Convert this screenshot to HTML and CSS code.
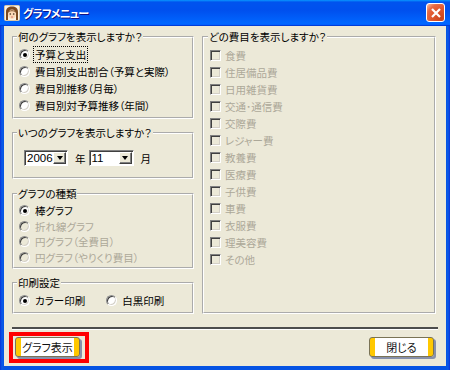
FILE: index.html
```html
<!DOCTYPE html>
<html lang="ja">
<head>
<meta charset="utf-8">
<title>グラフメニュー</title>
<link rel="stylesheet" href="styles.css">
</head>
<body>
<div class="window">
  <div class="titlebar">
    <svg class="appicon" width="16" height="16" viewBox="0 0 16 16">
      <rect x="0.5" y="0.5" width="15" height="15" rx="1" fill="#fbf3e6" stroke="#d9c7a8"/>
      <path d="M2 15V7C2 3 4.5 1.5 8 1.5S14 3 14 7V15H12V8H4V15Z" fill="#7a4a22"/>
      <ellipse cx="8" cy="9.3" rx="4" ry="4.7" fill="#fbd8b6"/>
      <path d="M4 7.6C5 4.4 11 4.4 12 7.6C10 5.9 6 5.9 4 7.6Z" fill="#7a4a22"/>
      <circle cx="6.3" cy="9" r="0.8" fill="#3a2a1a"/>
      <circle cx="9.7" cy="9" r="0.8" fill="#3a2a1a"/>
      <path d="M7 12H9" stroke="#d2605a" stroke-width="0.8"/>
    </svg>
    <span class="title">グラフメニュー</span>
    <span class="close"><svg width="12" height="12" viewBox="0 0 12 12"><path d="M2 2L10 10M10 2L2 10" stroke="#fff" stroke-width="2.2"/></svg></span>
  </div>
  <div class="client">
    <div class="columns">
      <div class="leftcol">
        <fieldset class="group g1">
          <legend>何のグラフを表示しますか？</legend>
          <div class="opt"><span class="radio on"></span><span class="focus">予算と支出</span></div>
          <div class="opt"><span class="radio"></span>費目別支出割合（予算と実際）</div>
          <div class="opt"><span class="radio"></span>費目別推移（月毎）</div>
          <div class="opt"><span class="radio"></span>費目別対予算推移（年間）</div>
        </fieldset>
        <fieldset class="group g2">
          <legend>いつのグラフを表示しますか？</legend>
          <div class="daterow">
            <span class="combo c1"><span class="val">2006</span><span class="drop"></span></span>
            <span class="unit">年</span>
            <span class="combo c2"><span class="val">11</span><span class="drop"></span></span>
            <span class="unit">月</span>
          </div>
        </fieldset>
        <fieldset class="group g3">
          <legend>グラフの種類</legend>
          <div class="opt"><span class="radio on"></span>棒グラフ</div>
          <div class="opt dis"><span class="radio"></span>折れ線グラフ</div>
          <div class="opt dis"><span class="radio"></span>円グラフ（全費目）</div>
          <div class="opt dis"><span class="radio"></span>円グラフ（やりくり費目）</div>
        </fieldset>
        <fieldset class="group g4">
          <legend>印刷設定</legend>
          <div class="printrow">
            <div class="opt"><span class="radio on"></span>カラー印刷</div>
            <div class="opt"><span class="radio"></span>白黒印刷</div>
          </div>
        </fieldset>
      </div>
      <fieldset class="group right">
        <legend>どの費目を表示しますか？</legend>
        <div class="opt dis"><span class="check"></span>食費</div>
        <div class="opt dis"><span class="check"></span>住居備品費</div>
        <div class="opt dis"><span class="check"></span>日用雑貨費</div>
        <div class="opt dis"><span class="check"></span>交通･通信費</div>
        <div class="opt dis"><span class="check"></span>交際費</div>
        <div class="opt dis"><span class="check"></span>レジャー費</div>
        <div class="opt dis"><span class="check"></span>教養費</div>
        <div class="opt dis"><span class="check"></span>医療費</div>
        <div class="opt dis"><span class="check"></span>子供費</div>
        <div class="opt dis"><span class="check"></span>車費</div>
        <div class="opt dis"><span class="check"></span>衣服費</div>
        <div class="opt dis"><span class="check"></span>理美容費</div>
        <div class="opt dis"><span class="check"></span>その他</div>
      </fieldset>
    </div>
    <div class="sep"></div>
    <div class="buttons">
      <div class="highlight"><span class="btn">グラフ表示</span></div>
      <span class="btn">閉じる</span>
    </div>
  </div>
</div>
</body>
</html>
```
FILE: styles.css
```css
* { box-sizing: border-box; }
html, body { margin: 0; padding: 0; }
body {
  width: 450px;
  height: 370px;
  overflow: hidden;
  background: #fff;
  font-family: "Noto Sans CJK JP", sans-serif;
  font-size: 10.5px;
  font-feature-settings: "palt";
  color: #000;
}
.window {
  width: 450px;
  height: 370px;
  display: flex;
  flex-direction: column;
  background: linear-gradient(90deg, #0831d9 0, #0a5ae8 2px, #0553e3 4px, #0553e3 calc(100% - 4px), #0a5ae8 calc(100% - 2px), #0831d9 100%);
}
.titlebar {
  height: 26px;
  flex: none;
  display: flex;
  align-items: center;
  padding: 0 5px 1px 4px;
  background: linear-gradient(180deg, #0997ff, #0053ee 8%, #0050ee 40%, #06f 88%, #06f 93%, #005bff 95%, #003dd7 96%, #003dd7);
  color: #fff;
}
.appicon { flex: none; margin-right: 3px; }
.title {
  flex: 1;
  font-weight: bold;
  font-size: 11px;
  text-shadow: 1px 1px 0 #0f1089;
  letter-spacing: -0.8px;
}
.close {
  width: 19px;
  height: 19px;
  display: flex;
  align-items: center;
  justify-content: center;
  border: 1px solid #fff;
  border-radius: 3px;
  background: radial-gradient(circle at 85% 85%, #c9441c 0%, #e0582f 50%, #e66b45 72%, #f5a88c 92%, #fff 100%);
}
.client {
  flex: 1;
  margin: 0 4px 4px;
  background: #ece9d8;
  display: flex;
  flex-direction: column;
}
.columns {
  display: flex;
  gap: 8px;
  padding: 4px 10px 0 8px;
}
.leftcol {
  width: 182px;
  flex: none;
  display: flex;
  flex-direction: column;
  gap: 7px;
}
.group {
  margin: 0;
  padding: 2px 4px 3px 5px;
  border: 2px groove #fff;
  min-width: 0;
}
.group legend {
  padding: 0 1px;
  margin-left: -2px;
  line-height: 14px;
}
.right { flex: 1; padding: 3px 4px 3px 6px; }
.opt {
  display: flex;
  align-items: center;
  height: 17px;
  white-space: nowrap;
}
.g3 .opt { height: 15.5px; }
.g3 { margin-top: 1px; padding-top: 2px; padding-bottom: 2px; }
.dis { color: #aca899; }
.radio {
  width: 11px;
  height: 11px;
  flex: none;
  margin-right: 5px;
  border-radius: 50%;
  border: 1px solid;
  border-color: #8d8d8d #fff #fff #8d8d8d;
  background: #fff;
  box-shadow: inset 1px 1px 0 #404040, inset -1px -1px 0 #d4d0c8;
  display: flex;
  align-items: center;
  justify-content: center;
}
.dis .radio { background: #ece9d8; }
.radio.on::after {
  content: "";
  width: 4px;
  height: 4px;
  border-radius: 50%;
  background: #000;
}
.focus { outline: 1px dotted #000; outline-offset: 0; padding: 0 1px; margin-left: -1px; }
.check {
  width: 11px;
  height: 11px;
  flex: none;
  margin-right: 4px;
  border: 1px solid;
  border-color: #808080 #fff #fff #808080;
  box-shadow: inset 1px 1px 0 #404040, inset -1px -1px 0 #d4d0c8;
  background: #ece9d8;
}
.g2 { padding-top: 10px; padding-bottom: 11px; }
.daterow {
  display: flex;
  align-items: center;
  height: 16px;
  padding-left: 5px;
}
.combo {
  height: 16px;
  display: flex;
  align-items: stretch;
  background: #fff;
  border: 1px solid;
  border-color: #808080 #fff #fff #808080;
  box-shadow: inset 1px 1px 0 #404040;
  font-family: "Liberation Sans", sans-serif;
  font-size: 11.5px;
  font-feature-settings: normal;
}
.c1 { width: 44px; }
.c2 { width: 45px; }
.val { flex: 1; padding: 1px 0 0 2px; line-height: 13px; }
.drop {
  width: 13px;
  margin: 1px 1px 1px 0;
  background: #ece9d8;
  border: 1px solid;
  border-color: #fff #404040 #404040 #fff;
  box-shadow: inset -1px -1px 0 #808080;
  display: flex;
  align-items: center;
  justify-content: center;
}
.drop::after {
  content: "";
  border-left: 3.5px solid transparent;
  border-right: 3.5px solid transparent;
  border-top: 4px solid #000;
}
.unit { margin: 0 3px 0 7px; }
.g4 { padding-top: 2px; padding-bottom: 3px; }
.printrow { display: flex; gap: 21px; }
.sep {
  margin: 13px 8px 0;
  height: 3px;
  border-top: 2px solid #4d4d4d;
  border-bottom: 1px solid #fff;
}
.buttons {
  display: flex;
  justify-content: space-between;
  align-items: flex-start;
  padding: 2px 12px 0 5px;
}
.highlight {
  border: 4px solid #ff0000;
  padding: 1px 5px 2px 2px;
}
.btn {
  display: flex;
  align-items: center;
  justify-content: center;
  width: 65px;
  height: 20px;
  border: 1px solid #7a7355;
  border-radius: 3px;
  background: linear-gradient(90deg, #ffc800 0, #ffc800 5px, #fff 5px, #fff calc(100% - 5px), #ffc800 calc(100% - 5px), #ffc800 100%);
  box-shadow: 2px 2px 0 #8790aa;
  font-size: 11px;
  color: #111;
}
.buttons > .btn { margin-top: 5px; }
```
